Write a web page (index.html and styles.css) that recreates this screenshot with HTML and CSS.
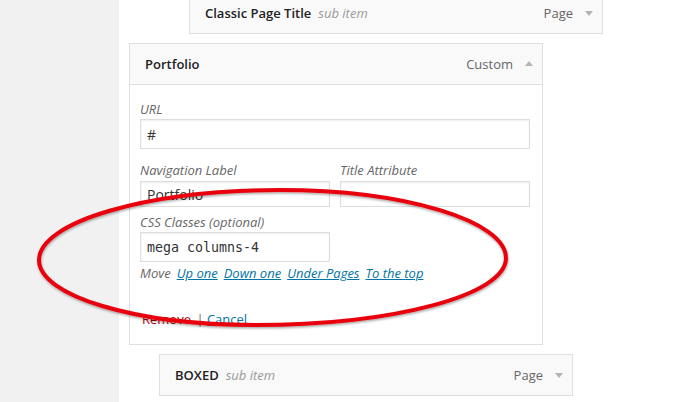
FILE: index.html
```html
<!DOCTYPE html>
<html>
<head>
<meta charset="utf-8">
<title>Menu item</title>
<link rel="stylesheet" href="styles.css">
</head>
<body>
<div class="screen">
  <aside class="admin-side"></aside>
  <main class="menu-panel">
    <ul class="menu-items">
      <li class="menu-item depth-2">
        <div class="item-bar">
          <span class="item-title">Classic Page Title<span class="sub">sub item</span></span>
          <span class="item-controls"><span class="item-type">Page</span><span class="arrow down"></span></span>
        </div>
      </li>
      <li class="menu-item depth-0 open">
        <div class="item-bar">
          <span class="item-title">Portfolio</span>
          <span class="item-controls"><span class="item-type">Custom</span><span class="arrow up"></span></span>
        </div>
        <div class="item-settings">
          <div class="field field-url">
            <label class="label">URL</label>
            <input class="input wide tall" type="text" value="#" readonly>
          </div>
          <div class="field-row">
            <div class="field">
              <label class="label">Navigation Label</label>
              <input class="input thin short" type="text" value="Portfolio" readonly>
            </div>
            <div class="field">
              <label class="label">Title Attribute</label>
              <input class="input thin short" type="text" value="" readonly>
            </div>
          </div>
          <div class="field field-css">
            <label class="label">CSS Classes (optional)</label>
            <input class="input thin tall mono" type="text" value="mega columns-4" readonly>
          </div>
          <div class="move-row">
            <span class="move-label">Move</span>
            <a class="link" href="#">Up one</a>
            <a class="link" href="#">Down one</a>
            <a class="link" href="#">Under Pages</a>
            <a class="link" href="#">To the top</a>
          </div>
          <div class="actions">
            <a class="delete" href="#">Remove</a> <span class="sep">|</span> <a class="link plain" href="#">Cancel</a>
          </div>
        </div>
      </li>
      <li class="menu-item depth-1">
        <div class="item-bar">
          <span class="item-title">BOXED<span class="sub">sub item</span></span>
          <span class="item-controls"><span class="item-type">Page</span><span class="arrow down"></span></span>
        </div>
      </li>
    </ul>
  </main>
  <svg class="annotation" width="698" height="402" viewBox="0 0 698 402" aria-hidden="true">
    <defs>
      <filter id="shadow" x="-10%" y="-20%" width="120%" height="140%">
        <feDropShadow dx="0.5" dy="1.5" stdDeviation="1" flood-color="#000" flood-opacity="0.35"/>
      </filter>
    </defs>
    <path d="M39 260 C39 222 147 190 280 190 C405 190 506 221 506 258 C506 295 394 325 255 325 C136 325 39 296 39 260 Z" fill="none" stroke="#e8000c" stroke-width="4" filter="url(#shadow)"/>
  </svg>
</div>
</body>
</html>
```

FILE: styles.css
```css
* { box-sizing: border-box; }
html, body { margin: 0; padding: 0; }
body {
  font-family: "Open Sans", "DejaVu Sans", sans-serif;
  font-size: 13px;
  color: #444;
  background: #fff;
  overflow: hidden;
}
.screen {
  position: relative;
  display: flex;
  width: 698px;
  height: 402px;
  overflow: hidden;
}
.admin-side {
  flex: none;
  width: 119px;
  background: #f1f1f1;
}
.menu-panel {
  flex: 1;
  background: #fff;
}
.menu-items {
  list-style: none;
  margin: -8px 0 0 10px;
  padding: 0;
  display: flex;
  flex-direction: column;
  gap: 9px;
}
.menu-item { width: 414px; }
.depth-1 { margin-left: 30px; }
.depth-2 { margin-left: 60px; }

.item-bar {
  height: 42px;
  border: 1px solid #dfdfdf;
  background: #f9f9f9;
  display: flex;
  align-items: center;
  justify-content: space-between;
  padding: 0 9px 0 15px;
}
.item-title {
  font-weight: 600;
  color: #222;
  line-height: 18px;
}
.sub {
  font-weight: 400;
  font-style: italic;
  color: #999;
  margin-left: 7px;
}
.item-controls {
  display: flex;
  align-items: center;
  gap: 12px;
}
.item-type { color: #666; line-height: 18px; }
.arrow {
  width: 0;
  height: 0;
  border-left: 4px solid transparent;
  border-right: 4px solid transparent;
}
.arrow.down { border-top: 5px solid #b4b4b4; margin-top: 1px; }
.arrow.up { border-bottom: 5px solid #b4b4b4; margin-top: -1px; }

.item-settings {
  border: 1px solid #dfdfdf;
  border-top: none;
  background: #fff;
  padding: 15px 12px 16px 10px;
}
.field { display: flex; flex-direction: column; }
.label {
  display: block;
  font-style: italic;
  color: #666;
  line-height: 18px;
}
.field-url { margin-bottom: 12px; }
.field-url .input { margin-top: 1px; }
.field-row {
  display: flex;
  gap: 10px;
  margin-bottom: 6px;
}
.field-row .input { margin-top: 2px; }
.field-css .input { margin-top: 1px; }
.input {
  display: block;
  border: 1px solid #ddd;
  background: #fff;
  box-shadow: inset 0 1px 2px rgba(0,0,0,0.07);
  padding: 0 6px;
  font-family: "Open Sans", "DejaVu Sans", sans-serif;
  font-size: 14px;
  color: #333;
  outline: none;
  margin: 0;
  border-radius: 0;
}
.wide { width: 390px; }
.thin { width: 190px; }
.tall { height: 30px; }
.short { height: 26px; }
.mono {
  font-family: "DejaVu Sans Mono", "Liberation Mono", monospace;
  font-size: 13.3px;
}

.move-row {
  display: flex;
  gap: 6px;
  margin-top: 2px;
  line-height: 18px;
  font-style: italic;
}
.move-label { color: #666; }
.link { color: #0074a2; text-decoration: underline; }
.actions {
  margin-top: 28px;
  line-height: 18px;
  color: #444;
}
.delete {
  color: #a00;
  text-decoration: none;
  padding: 1px 2px;
}
.sep { color: #666; }
.plain { font-style: normal; }

.annotation {
  position: absolute;
  left: 0;
  top: 0;
  pointer-events: none;
}
```
